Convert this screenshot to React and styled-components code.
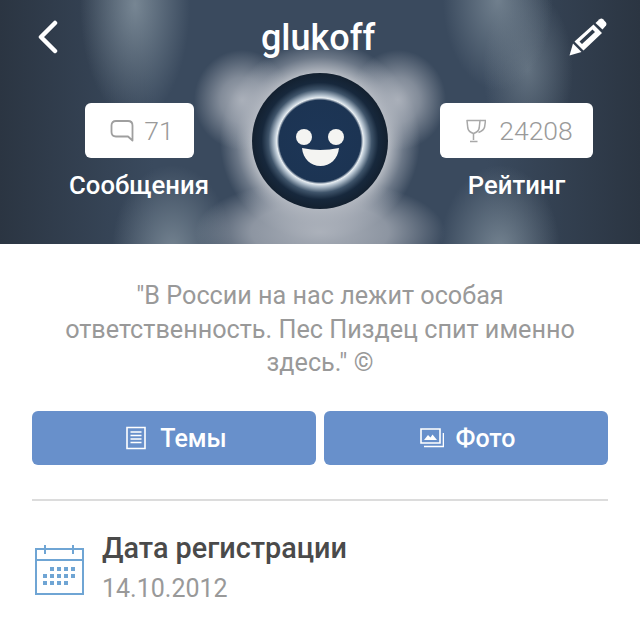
import React from 'react'
import styled, { createGlobalStyle } from 'styled-components'

const GlobalStyle = createGlobalStyle`
    html, body {
        margin: 0;
        padding: 0;
        background: #ffffff;
    }
    body {
        font-family: Roboto, "Liberation Sans", sans-serif;
    }
`

const Page = styled.div`
    width: 640px;
    height: 628px;
    overflow: hidden;
    background: #ffffff;
`

const Header = styled.header`
    height: 244px;
    color: #ffffff;
    background-color: #3a4a5e;
    background-image:
        radial-gradient(ellipse 48px 50px at 242px 100px, rgba(178, 183, 192, 0.9) 0, rgba(178, 183, 192, 0.6) 45%, rgba(178, 183, 192, 0) 100%),
        radial-gradient(ellipse 48px 50px at 398px 100px, rgba(178, 183, 192, 0.9) 0, rgba(178, 183, 192, 0.6) 45%, rgba(178, 183, 192, 0) 100%),
        radial-gradient(ellipse 125px 52px at 320px 232px, rgba(176, 181, 190, 0.95) 0, rgba(176, 181, 190, 0.7) 55%, rgba(176, 181, 190, 0) 100%),
        radial-gradient(circle 100px at 320px 141px, #c4c8ce 0, #b4b9c1 68%, rgba(140, 149, 162, 0.6) 84%, rgba(60, 77, 99, 0) 100%),
        radial-gradient(ellipse 55px 115px at 135px 5px, rgba(122, 137, 150, 0.95) 0, rgba(122, 137, 150, 0) 100%),
        radial-gradient(ellipse 60px 85px at 172px 250px, rgba(122, 137, 150, 0.9) 0, rgba(122, 137, 150, 0) 100%),
        radial-gradient(ellipse 55px 90px at 498px 0, rgba(122, 137, 150, 0.85) 0, rgba(122, 137, 150, 0) 100%),
        radial-gradient(ellipse 45px 80px at 528px 70px, rgba(122, 137, 150, 0.65) 0, rgba(122, 137, 150, 0) 100%),
        radial-gradient(ellipse 60px 85px at 500px 250px, rgba(122, 137, 150, 0.9) 0, rgba(122, 137, 150, 0) 100%),
        linear-gradient(90deg, #2b3542 0, #3a4a5e 24%, #3a4a5e 76%, #2b3542 100%);
`

const TopBar = styled.div`
    height: 73px;
    padding: 0 33px 0 29px;
    display: grid;
    grid-template-columns: 1fr auto 1fr;
    align-items: center;
`

const BackIcon = styled.svg`
    width: 22px;
    height: 34px;
    margin-left: 8px;
    display: block;
`

const EditIcon = styled.svg`
    width: 38px;
    height: 38px;
    justify-self: end;
    display: block;
`

const Nick = styled.div`
    font-size: 36px;
    font-weight: 500;
    line-height: 42px;
    padding-top: 2px;
`

const StatsRow = styled.div`
    display: grid;
    grid-template-columns: 162px 136px 1fr;
    column-gap: 32px;
    padding: 0 27px 0 58px;
`

const Stat = styled.div`
    display: flex;
    flex-direction: column;
    align-items: center;
    padding-top: 30px;
`

const StatBox = styled.div`
    width: ${props => props.$width}px;
    height: 55px;
    padding-left: 6px;
    box-sizing: border-box;
    background: #ffffff;
    border-radius: 6px;
    display: flex;
    align-items: center;
    justify-content: center;
    gap: ${props => props.$gap}px;
    color: #9a9a9a;
    font-size: 26.5px;
    font-weight: 300;
`

const StatLabel = styled.div`
    margin-top: 12px;
    font-size: 25.7px;
    font-weight: 500;
    line-height: 30px;
    white-space: nowrap;
`

const StatIcon = styled.svg`
    width: ${props => props.$w}px;
    height: ${props => props.$h}px;
    display: block;
`

const Avatar = styled.svg`
    width: 136px;
    height: 136px;
    display: block;
`

const Content = styled.div`
    padding: 35px 32px 0;
`

const Quote = styled.p`
    margin: 0;
    padding: 0 20px;
    text-align: center;
    color: #999999;
    font-size: 25.2px;
    line-height: 33.5px;
`

const Buttons = styled.div`
    display: grid;
    grid-template-columns: 1fr 1fr;
    column-gap: 8px;
    margin-top: 31.5px;
`

const Button = styled.div`
    height: 54px;
    padding-left: 3px;
    box-sizing: border-box;
    border-radius: 6px;
    background: #6890cb;
    color: #ffffff;
    display: flex;
    align-items: center;
    justify-content: center;
    gap: 12px;
    font-size: 25px;
    font-weight: 500;
`

const ButtonIcon = styled.svg`
    width: 24px;
    height: 24px;
    display: block;
`

const Divider = styled.div`
    height: 2px;
    margin-top: 34px;
    background: #dcdcdc;
`

const InfoRow = styled.div`
    display: flex;
    align-items: center;
    gap: 17px;
    margin-top: 28px;
    padding-left: 3px;
`

const InfoIcon = styled.svg`
    width: 50px;
    height: 52px;
    display: block;
`

const InfoTitle = styled.div`
    color: #4a4a4a;
    font-size: 28.8px;
    font-weight: 500;
    line-height: 38px;
`

const InfoValue = styled.div`
    color: #999999;
    font-size: 25px;
    line-height: 44px;
`

function Smiley() {
    return (
        <Avatar viewBox="0 0 136 136">
            <defs>
                <radialGradient id="disc" cx="50%" cy="50%" r="50%">
                    <stop offset="0" stopColor="#1d3657" />
                    <stop offset="0.6" stopColor="#1c3453" />
                    <stop offset="0.635" stopColor="#e8eef2" />
                    <stop offset="0.67" stopColor="#b4c2cf" />
                    <stop offset="0.76" stopColor="#3f546a" />
                    <stop offset="0.86" stopColor="#17283c" />
                    <stop offset="1" stopColor="#13202f" />
                </radialGradient>
            </defs>
            <circle cx="68" cy="68" r="68" fill="url(#disc)" />
            <circle cx="52" cy="64" r="8" fill="#f4f4f2" />
            <circle cx="84" cy="64" r="8" fill="#f4f4f2" />
            <path d="M50 75 Q68 79 87 75 C86 86 78 93 68.500 93 C59 93 51 86 50 75 Z" fill="#f4f4f2" />
        </Avatar>
    )
}

function App() {
    return (
        <Page>
            <GlobalStyle />
            <Header>
                <TopBar>
                    <BackIcon viewBox="0 0 22 34">
                        <path d="M18 3 L4 17 L18 31" fill="none" stroke="#ffffff" strokeWidth="4.5" strokeLinecap="round" strokeLinejoin="round" />
                    </BackIcon>
                    <Nick>glukoff</Nick>
                    <EditIcon viewBox="0 0 38 38">
                        <path d="M0.5 37.5 L4 25.5 L12.500 34 Z" fill="#ffffff" />
                        <path d="M5.500 23.500 L24.500 6.500 L33 15 L14.500 32.500 Z M10.500 23.500 L13 26 L26 14 L23.500 11.500 Z" fill="#ffffff" fillRule="evenodd" />
                        <path d="M26.500 5 L30.500 1.200 Q32.500 0 34 1.200 L37 4.500 Q38 6 37 7.500 L33.500 11.500 Z" fill="#ffffff" />
                    </EditIcon>
                </TopBar>
                <StatsRow>
                    <Stat>
                        <StatBox $width={109} $gap={10}>
                            <StatIcon $w={24} $h={24} viewBox="0 0 24 24">
                                <path d="M6 2 H18 Q22.500 2 22.500 6.500 V21.500 L18 17.500 H6 Q1.500 17.500 1.500 13 V6.500 Q1.500 2 6 2 Z" fill="none" stroke="#9f9f9f" strokeWidth="1.8" strokeLinejoin="round" />
                            </StatIcon>
                            71
                        </StatBox>
                        <StatLabel>Сообщения</StatLabel>
                    </Stat>
                    <Smiley />
                    <Stat>
                        <StatBox $width={153} $gap={13}>
                            <StatIcon $w={20} $h={24} viewBox="0 0 20 24">
                                <path d="M1 1.500 H14 L13.200 9 Q12.500 13 7.500 14.500 Q2.500 13 1.800 9 Z" fill="none" stroke="#a8a8a8" strokeWidth="1.5" strokeLinejoin="round" />
                                <path d="M14 1.500 H19.500 L18.600 8 Q17.800 11.500 12.500 13.500 M7.500 14.500 V21 M4 22.500 H11.500" fill="none" stroke="#a8a8a8" strokeWidth="1.5" />
                            </StatIcon>
                            24208
                        </StatBox>
                        <StatLabel>Рейтинг</StatLabel>
                    </Stat>
                </StatsRow>
            </Header>
            <Content>
                <Quote>"В России на нас лежит особая ответственность. Пес Пиздец спит именно здесь." ©</Quote>
                <Buttons>
                    <Button>
                        <ButtonIcon viewBox="0 0 24 24">
                            <path d="M3 1.500 H21 V22.500 H3 Z" fill="none" stroke="#ffffff" strokeWidth="1.6" />
                            <path d="M6.500 6 H17.500 M6.500 9.500 H17.500 M6.500 13 H17.500 M6.500 16.500 H17.500" fill="none" stroke="#ffffff" strokeWidth="1.6" />
                        </ButtonIcon>
                        Темы
                    </Button>
                    <Button>
                        <ButtonIcon viewBox="0 0 24 24">
                            <path d="M1 3 H20 V17 H1 Z M4 20.500 H23.500 V7" fill="none" stroke="#ffffff" strokeWidth="1.6" />
                            <path d="M4 14 L8 9 L10.500 11.500 L12.500 8.500 L17 14 Z" fill="#ffffff" />
                        </ButtonIcon>
                        Фото
                    </Button>
                </Buttons>
                <Divider />
                <InfoRow>
                    <InfoIcon viewBox="0 0 50 52">
                        <path d="M1 5 H48 V50 H1 Z M1 16 H48" fill="none" stroke="#6fa5d4" strokeWidth="2" />
                        <path d="M10 1 V10 M38 1 V10" fill="none" stroke="#6fa5d4" strokeWidth="2" />
                        <path d="M15 25 H40 M8 32 H40 M8 39 H33" fill="none" stroke="#6fa5d4" strokeWidth="4" strokeDasharray="4 3" />
                    </InfoIcon>
                    <div>
                        <InfoTitle>Дата регистрации</InfoTitle>
                        <InfoValue>14.10.2012</InfoValue>
                    </div>
                </InfoRow>
            </Content>
        </Page>
    )
}

export default App
